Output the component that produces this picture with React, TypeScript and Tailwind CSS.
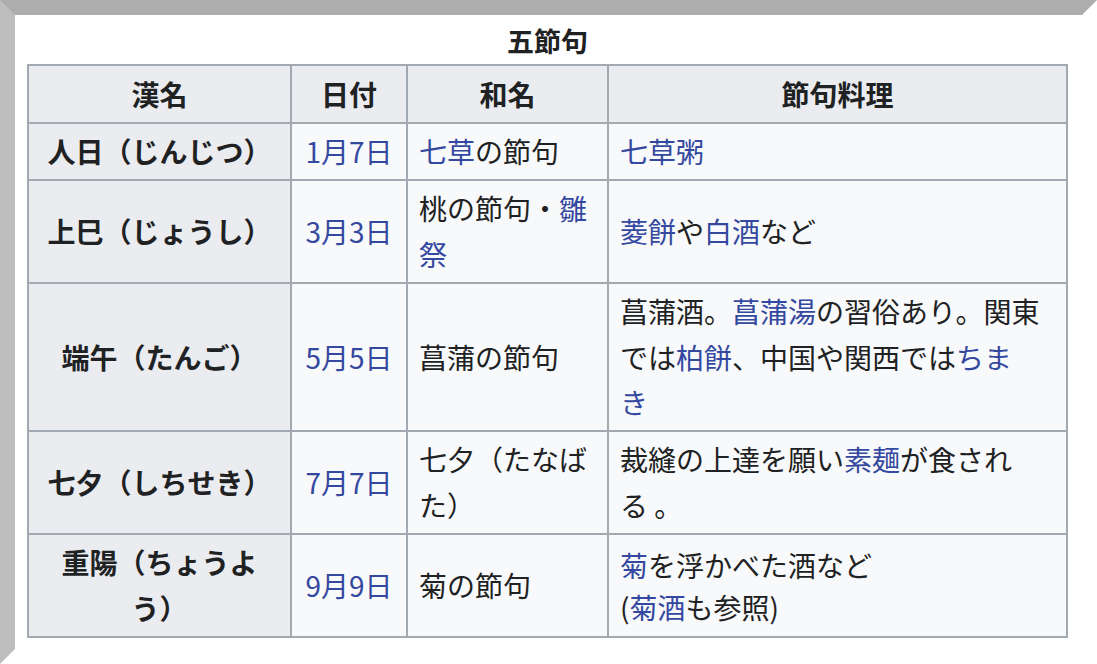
import React from "react";

const A = ({ children }: { children: React.ReactNode }) => (
  <span className="text-[#3448a0]">{children}</span>
);

const th = "border-2 border-[#a2a9b1] bg-[#eaecf0] px-[11px] py-[5px] text-center font-bold align-middle";
const td = "border-2 border-[#a2a9b1] bg-[#f8f9fa] px-[11px] py-[5px] align-middle";

export default function App() {
  return (
    <div
      className="box-border w-[1097px] h-[664px] bg-white border-[15px] border-t-[#adadad] border-l-[#bdbdbd] border-r-white border-b-white"
      style={{ fontFamily: '"Noto Sans CJK JP", "Noto Sans", sans-serif' }}
    >
      <div className="pt-[3px] pl-[12px]">
        <table className="border-collapse text-[28px] leading-[45.4px] text-[#202122] w-[1039px] table-fixed">
          <caption className="font-bold text-[27px] leading-[46px] text-center text-[#202122]">五節句</caption>
          <colgroup>
            <col className="w-[263px]" />
            <col className="w-[116px]" />
            <col className="w-[201px]" />
            <col className="w-[459px]" />
          </colgroup>
          <thead>
            <tr>
              <th className={th + " leading-[46px]"}>漢名</th>
              <th className={th + " leading-[46px]"}>日付</th>
              <th className={th + " leading-[46px]"}>和名</th>
              <th className={th + " leading-[46px]"}>節句料理</th>
            </tr>
          </thead>
          <tbody>
            <tr>
              <th className={th}>人日（じんじつ）</th>
              <td className={td + " text-center"}><A>1月7日</A></td>
              <td className={td}><A>七草</A>の節句</td>
              <td className={td}><A>七草粥</A></td>
            </tr>
            <tr>
              <th className={th}>上巳（じょうし）</th>
              <td className={td + " text-center"}><A>3月3日</A></td>
              <td className={td}>
                桃の節句・<A>雛</A>
                <br />
                <A>祭</A>
              </td>
              <td className={td}><A>菱餅</A>や<A>白酒</A>など</td>
            </tr>
            <tr>
              <th className={th}>端午（たんご）</th>
              <td className={td + " text-center"}><A>5月5日</A></td>
              <td className={td}>菖蒲の節句</td>
              <td className={td}>
                菖蒲酒。<A>菖蒲湯</A>の習俗あり。関東
                <br />
                では<A>柏餅</A>、中国や関西では<A>ちま</A>
                <br />
                <A>き</A>
              </td>
            </tr>
            <tr>
              <th className={th}>七夕（しちせき）</th>
              <td className={td + " text-center"}><A>7月7日</A></td>
              <td className={td}>
                七夕（たなば
                <br />
                た）
              </td>
              <td className={td}>
                裁縫の上達を願い<A>素麺</A>が食され
                <br />
                る 。
              </td>
            </tr>
            <tr>
              <th className={th}>
                重陽（ちょうよ
                <br />
                う）
              </th>
              <td className={td + " text-center"}><A>9月9日</A></td>
              <td className={td}>菊の節句</td>
              <td className={td + " leading-[42px]"}>
                <A>菊</A>を浮かべた酒など
                <br />
                (<A>菊酒</A>も参照)
              </td>
            </tr>
          </tbody>
        </table>
      </div>
    </div>
  );
}
